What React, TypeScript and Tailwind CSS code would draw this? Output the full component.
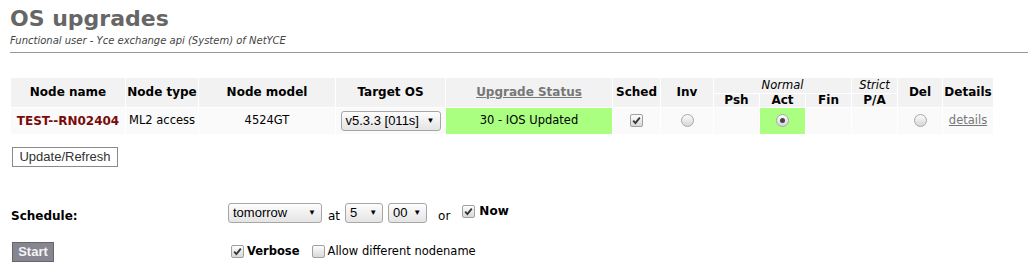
import React from "react"

function Check({ checked = true }: { checked?: boolean }) {
  return (
    <span className="inline-flex w-[13px] h-[13px] items-center justify-center rounded-[2px] border border-[#a0a0a0] bg-linear-to-b from-[#fdfdfd] to-[#d8d8d8] align-middle">
      {checked && (
        <svg width="9" height="9" viewBox="0 0 9 9">
          <path d="M1.2 4.6 L3.4 7 L7.8 1.6" fill="none" stroke="#333" strokeWidth="1.8" />
        </svg>
      )}
    </span>
  )
}

function Radio({ on = false }: { on?: boolean }) {
  return (
    <span className="inline-flex w-[13px] h-[13px] items-center justify-center rounded-full border border-[#a8a8a8] bg-linear-to-b from-[#fbfbfb] to-[#d6d6d6] align-middle">
      {on && <span className="w-[5px] h-[5px] rounded-full bg-[#444]" />}
    </span>
  )
}

function Select({ value, width }: { value: string; width: string }) {
  return (
    <span
      className={`inline-flex ${width} h-[20px] items-center justify-between rounded-[3px] border border-[#a6a6a6] bg-linear-to-b from-[#fdfdfd] to-[#e4e4e4] pl-[4px] pr-[5px] text-[13px] text-black font-['Liberation_Sans',Arial,sans-serif]`}
    >
      <span>{value}</span>
      <span className="text-[8px] leading-none">▼</span>
    </span>
  )
}

export default function App() {
  const th = "bg-[#f2f2f2] p-0 text-[12px] font-bold text-black text-center leading-[13px]"
  const td = "bg-[#fafafa] p-0 text-[11.5px] text-center"

  return (
    <div className="w-[1028px] h-[267px] overflow-hidden bg-white text-black font-['DejaVu_Sans',Verdana,sans-serif]">
      <div className="pl-[10px] pt-[5px]">
        <h1 className="text-[22px] font-bold leading-[28px] text-[#666]">OS upgrades</h1>
        <p className="mt-[2px] text-[10px] italic leading-[12px] text-[#444]">
          Functional user - Yce exchange api (System) of NetYCE
        </p>
        <div className="mt-[5px] border-t border-[#999]" />
      </div>

      <table className="ml-[10px] mt-[24px] w-[984px] table-fixed border-separate border-spacing-[1px]">
        <colgroup>
          <col className="w-[114px]" />
          <col className="w-[72px]" />
          <col className="w-[136px]" />
          <col className="w-[109px]" />
          <col className="w-[166px]" />
          <col className="w-[47px]" />
          <col className="w-[52px]" />
          <col className="w-[45px]" />
          <col className="w-[45px]" />
          <col className="w-[45px]" />
          <col className="w-[45px]" />
          <col className="w-[44px]" />
          <col className="w-[50px]" />
        </colgroup>
        <thead>
          <tr className="h-[15px]">
            <th rowSpan={2} className={th}>Node name</th>
            <th rowSpan={2} className={th}>Node type</th>
            <th rowSpan={2} className={th}>Node model</th>
            <th rowSpan={2} className={th}>Target OS</th>
            <th rowSpan={2} className={th}>
              <span className="text-[#777] underline">Upgrade Status</span>
            </th>
            <th rowSpan={2} className={th}>Sched</th>
            <th rowSpan={2} className={th}>Inv</th>
            <th colSpan={3} className={`${th} !font-normal italic !text-[11.5px]`}>Normal</th>
            <th className={`${th} !font-normal italic !text-[11.5px]`}>Strict</th>
            <th rowSpan={2} className={th}>Del</th>
            <th rowSpan={2} className={th}>Details</th>
          </tr>
          <tr className="h-[13px]">
            <th className={th}>Psh</th>
            <th className={th}>Act</th>
            <th className={th}>Fin</th>
            <th className={th}>P/A</th>
          </tr>
        </thead>
        <tbody>
          <tr className="h-[26px]">
            <td className={`${td} !text-[12px] font-bold text-[#7b0a0a]`}>TEST--RN02404</td>
            <td className={`${td} text-left pl-[3px]`}>ML2 access</td>
            <td className={td}>4524GT</td>
            <td className={td}>
              <Select value="v5.3.3 [011s]" width="w-[100px]" />
            </td>
            <td className={`${td} !bg-[#aaff80]`}>30 - IOS Updated</td>
            <td className={td}><Check /></td>
            <td className={td}><Radio /></td>
            <td className={td} />
            <td className={`${td} !bg-[#aaff80]`}><Radio on /></td>
            <td className={td} />
            <td className={td} />
            <td className={td}><Radio /></td>
            <td className={td}>
              <span className="text-[#777] underline">details</span>
            </td>
          </tr>
        </tbody>
      </table>

      <div className="ml-[12px] mt-[9px]">
        <button className="h-[20px] w-[106px] border border-[#8a8a8a] bg-white text-[13px] leading-none text-[#333] font-['Liberation_Sans',Arial,sans-serif]">
          Update/Refresh
        </button>
      </div>

      <div className="mt-[35px] flex items-end">
        <div className="w-[228px] pl-[11px] text-[12px] font-bold leading-[14px]">Schedule:</div>
        <div className="flex items-end text-[12px] leading-[14px]">
          <Select value="tomorrow" width="w-[94px]" />
          <span className="ml-[6px] mr-[5px]">at</span>
          <Select value="5" width="w-[38px]" />
          <span className="ml-[5px]" />
          <Select value="00" width="w-[39px]" />
          <span className="ml-[11px] mr-[12px]">or</span>
          <span className="mb-[5px] flex items-center gap-[4px]">
            <Check />
            <span className="font-bold">Now</span>
          </span>
        </div>
      </div>

      <div className="mt-[16px] flex items-center">
        <div className="w-[231px] pl-[12px]">
          <button className="h-[20px] w-[42px] border border-[#666] bg-[#868690] text-[13px] font-bold leading-none text-[#f4f4f4] font-['Liberation_Sans',Arial,sans-serif]">
            Start
          </button>
        </div>
        <div className="flex items-center gap-[3px] text-[11.5px] leading-[14px]">
          <Check />
          <span className="font-bold">Verbose</span>
          <span className="ml-[6px]" />
          <Check checked={false} />
          <span>Allow different nodename</span>
        </div>
      </div>
    </div>
  )
}
